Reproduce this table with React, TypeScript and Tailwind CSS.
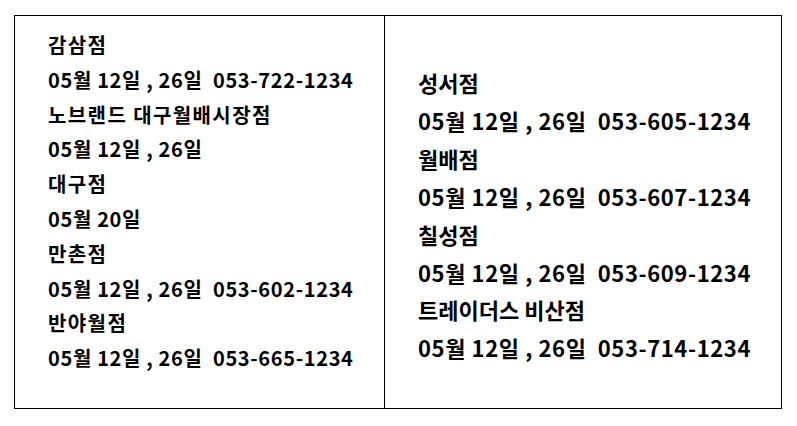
import React from "react";

const left: string[] = [
  "감삼점",
  "05월 12일 , 26일  053-722-1234",
  "노브랜드 대구월배시장점",
  "05월 12일 , 26일",
  "대구점",
  "05월 20일",
  "만촌점",
  "05월 12일 , 26일  053-602-1234",
  "반야월점",
  "05월 12일 , 26일  053-665-1234",
];

const right: string[] = [
  "성서점",
  "05월 12일 , 26일  053-605-1234",
  "월배점",
  "05월 12일 , 26일  053-607-1234",
  "칠성점",
  "05월 12일 , 26일  053-609-1234",
  "트레이더스 비산점",
  "05월 12일 , 26일  053-714-1234",
];

export default function App() {
  return (
    <div
      className="w-[797px] h-[426px] bg-white pt-[15px] pl-[14px] text-black"
      style={{ fontFamily: '"Noto Sans CJK KR", "Noto Sans", sans-serif' }}
    >
      <div className="flex w-[768px] h-[394px] border border-black">
        <div className="w-[370px] border-r border-black pl-[33px] pt-[12px]">
          {left.map((t, i) => (
            <div
              key={i}
              className={
                i % 2 === 0
                  ? "whitespace-pre text-[20px] font-bold leading-[34.8px] tracking-[1.4px]"
                  : "whitespace-pre text-[20px] font-bold leading-[34.8px] tracking-[0.65px]"
              }
            >
              {t}
            </div>
          ))}
        </div>
        <div className="flex-1 pl-[33px] pt-[48px]">
          {right.map((t, i) => (
            <div
              key={i}
              className={
                i % 2 === 0
                  ? "whitespace-pre text-[22px] font-bold leading-[37.9px]"
                  : "whitespace-pre text-[22px] font-bold leading-[37.9px] tracking-[0.6px]"
              }
            >
              {t}
            </div>
          ))}
        </div>
      </div>
    </div>
  );
}
